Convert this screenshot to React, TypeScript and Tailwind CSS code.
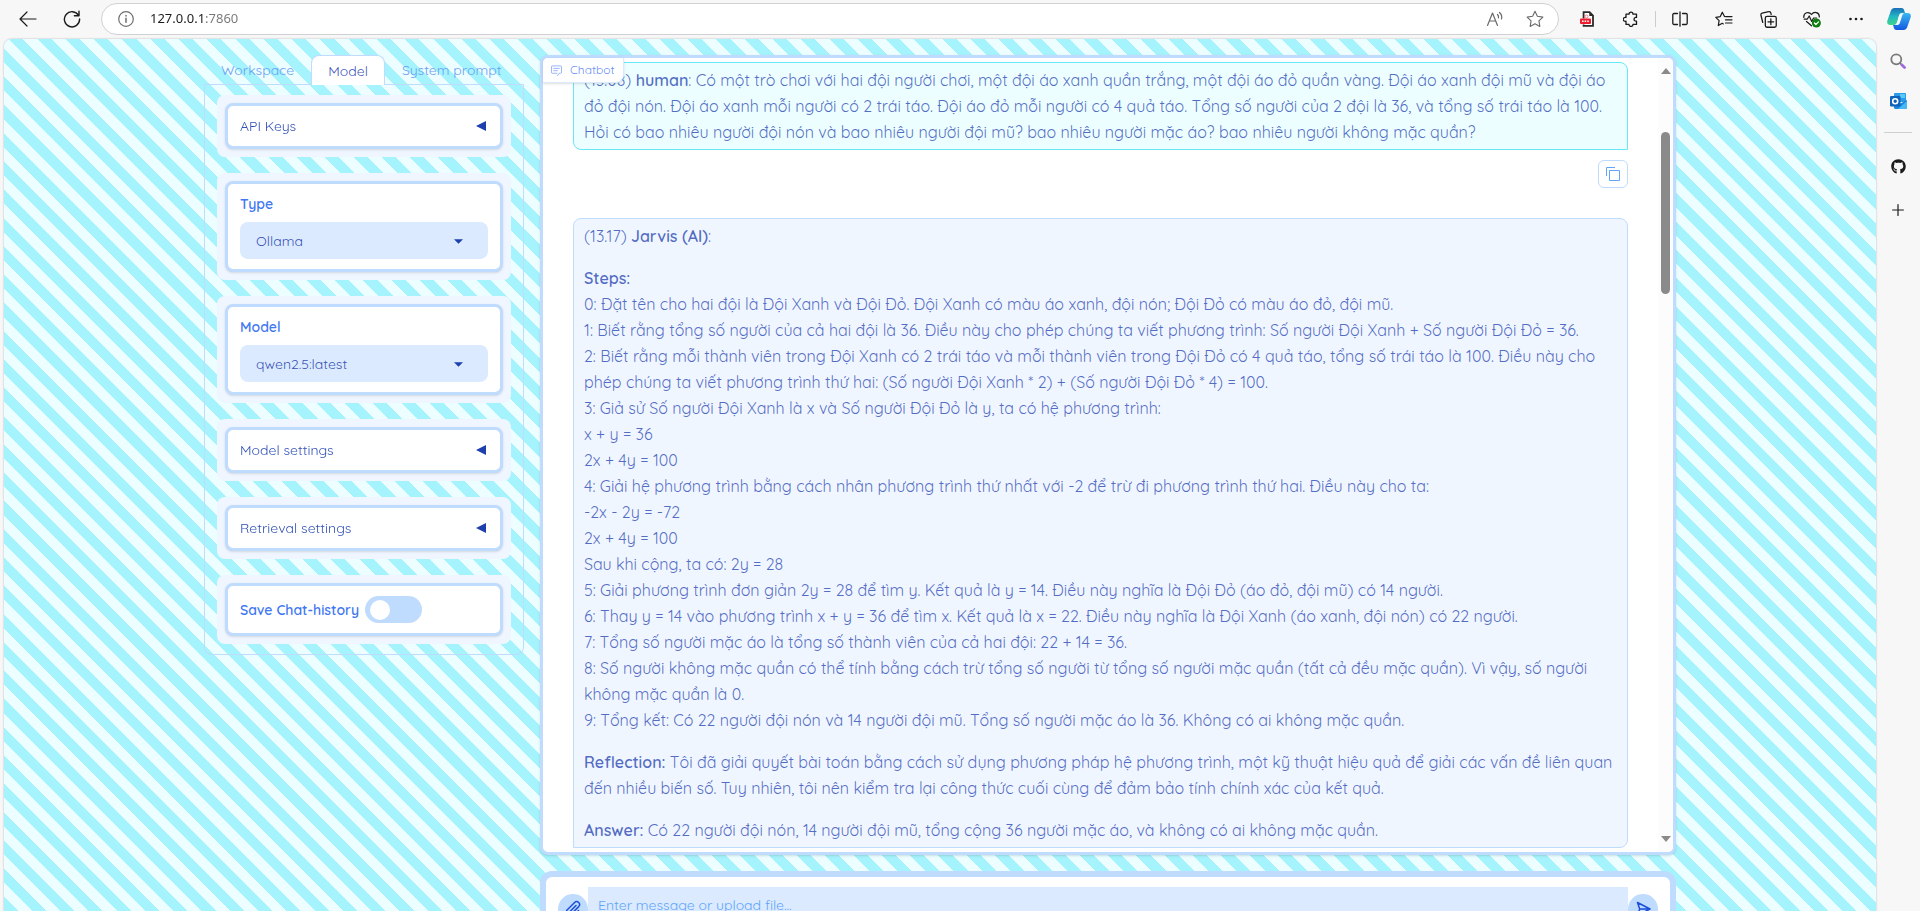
import { useState, type ReactNode } from "react";
import { FaGithub } from "react-icons/fa";

function ToolButton({ label, children }: { label: string; children: ReactNode }) {
  return (
    <button type="button" aria-label={label} className="flex h-8 w-11 shrink-0 items-center justify-center text-[#1b1b1b]">
      {children}
    </button>
  );
}

const line = { fill: "none", stroke: "currentColor", strokeWidth: 1.2, strokeLinecap: "round", strokeLinejoin: "round" } as const;
const STAR = "M8 1.2 10.1 5.6 15 6.3 11.5 9.7 12.3 14.6 8 12.3 3.7 14.6 4.5 9.7 1 6.3 5.9 5.6Z";

function BrowserBar() {
  return (
    <header className="flex h-[39px] shrink-0 items-center pb-[1px]">
      <div className="flex w-[101px] items-center pl-[6px]">
        <ToolButton label="Back">
          <svg viewBox="0 0 18 16" className="h-4 w-[18px]" {...line}>
            <path d="M8 1 1 8l7 7M1 8h16" />
          </svg>
        </ToolButton>
        <ToolButton label="Refresh">
          <svg viewBox="0 0 18 18" className="h-[18px] w-[18px]" {...line} strokeWidth={1.4}>
            <path d="M15.6 5.5A7.6 7.6 0 1 0 16.6 9M16 1.2v4.6h-4.6" />
          </svg>
        </ToolButton>
      </div>
      <div className="flex h-8 flex-1 items-center rounded-full border border-[#cfd1d3] bg-white pl-4 pr-[3px]">
        <svg viewBox="0 0 16 16" className="h-4 w-4 text-[#6e6e6e]" {...line}>
          <circle cx="8" cy="8" r="7.3" />
          <path d="M8 7.3v4M8 4.6v.3" strokeWidth={1.5} />
        </svg>
        <input
          aria-label="Address"
          defaultValue="127.0.0.1:7860"
          className="ml-4 min-w-0 flex-1 bg-[linear-gradient(90deg,#1b1b1b_55px,#767676_55px)] bg-clip-text font-['Noto_Sans',sans-serif] text-[13px] text-transparent outline-none"
        />
        <button type="button" aria-label="Read aloud" className="flex h-7 w-10 items-center justify-center text-[#6b6b6b]">
          <svg viewBox="0 0 18 16" className="h-4 w-[18px]" {...line}>
            <path d="M1.5 14.5 6.5 2l5 12.500M3.300 10h6.400M11.500 3.500q1.400 1.500 1 3.500M13.500 1.500q3 2.800 2 6.500" />
          </svg>
        </button>
        <button type="button" aria-label="Add to favorites" className="flex h-7 w-10 items-center justify-center text-[#6b6b6b]">
          <svg viewBox="0 0 16 16" className="h-[18px] w-[18px]" {...line} strokeWidth={1}>
            <path d={STAR} />
          </svg>
        </button>
      </div>
      <div className="flex items-center pl-[6px]">
        <ToolButton label="PDF tools">
          <svg viewBox="0 0 16 16" className="h-4 w-4">
            <path d="M4.600 7.500V1.200h6L14 4.600v10.200H4.600v-1.300" fill="#fff" stroke="#2a2a2a" strokeWidth="1.800" />
            <path d="M10.300 1v4H14" fill="#2a2a2a" />
            <circle cx="7.500" cy="5.500" r="1.500" fill="none" stroke="#ef7b83" />
            <rect x="1" y="7.400" width="11" height="5.600" rx="1" fill="#f01c2e" />
            <path d="M3 10.200h7" stroke="#fff" strokeWidth="1.500" strokeDasharray="1.600 1" />
          </svg>
        </ToolButton>
        <ToolButton label="Extensions">
          <svg viewBox="0 0 16 16" className="h-4 w-4" {...line} strokeWidth={1.300}>
            <path d="M3 3.200h3a2 2 0 1 1 4 0h3.500v3.300a1.900 1.900 0 1 0 0 3.600v3.300H10a2 2 0 1 1-4 0H3v-3.200a2 2 0 1 1 0-3.700Z" />
          </svg>
        </ToolButton>
        <div className="mx-[2px] h-4 w-px bg-[#cccccc]" />
        <ToolButton label="Split screen">
          <svg viewBox="0 0 16 16" className="h-4 w-4" {...line} strokeWidth={1.300}>
            <path d="M8 .8v14.400M5.500 2.500H2A1.200 1.200 0 0 0 .8 3.700v8.600A1.200 1.200 0 0 0 2 13.500h3.500M10.500 2.500H14a1.200 1.200 0 0 1 1.200 1.200v8.600a1.200 1.200 0 0 1-1.200 1.200h-3.500" />
          </svg>
        </ToolButton>
        <ToolButton label="Favorites">
          <svg viewBox="0 0 18 16" className="h-4 w-[18px]" {...line}>
            <path d="M9.500 5.500 7.300 1.200 5.300 5.600.8 6.300l3.300 3.400-.8 4.900 4-2.300 1 .6M10.500 5.600h6.500M10.500 8.800h6.500M10.500 12h6.500" />
          </svg>
        </ToolButton>
        <ToolButton label="Collections">
          <svg viewBox="0 0 16 16" className="h-[17px] w-[17px]" {...line}>
            <path d="M2.600 10.800 .9 4A1.600 1.600 0 0 1 2 2.100L8.200.7a1.600 1.600 0 0 1 2 1.200l.3 1.300" />
            <rect x="5" y="5" width="10.300" height="10.300" rx="1.600" />
            <path d="M10.200 7.500v5.400M7.500 10.200h5.400" />
          </svg>
        </ToolButton>
        <ToolButton label="Browser essentials">
          <svg viewBox="0 0 18 17" className="h-[17px] w-[18px]" {...line}>
            <path d="M.8 6.500C.4 1.200 6 .2 8.500 3.500c2.500-3.300 8-2.500 7.800 2.500M1.200 8.200h3L6.200 5l2.500 5.500L10.600 7h3M3.500 10.500l5 4.300" />
            <circle cx="13.400" cy="12" r="4.500" fill="#107c10" stroke="none" />
            <path d="m11.400 12 1.500 1.500 2.600-2.700" stroke="#fff" />
          </svg>
        </ToolButton>
        <ToolButton label="Settings and more">
          <svg viewBox="0 0 16 4" className="h-1 w-4" fill="currentColor">
            <circle cx="2.500" cy="2" r="1.300" />
            <circle cx="8" cy="2" r="1.300" />
            <circle cx="13.500" cy="2" r="1.300" />
          </svg>
        </ToolButton>
        <button type="button" aria-label="Copilot" className="flex h-8 w-[42px] shrink-0 items-center justify-center">
          <svg viewBox="0 0 24 24" className="h-6 w-6">
            <defs>
              <linearGradient id="cop-a" x1="0" y1="0" x2="0" y2="1">
                <stop offset="0" stopColor="#1b6fb8" />
                <stop offset=".5" stopColor="#22b8c4" />
                <stop offset="1" stopColor="#3fd48c" />
              </linearGradient>
              <linearGradient id="cop-b" x1="0" y1="0" x2="0" y2="1">
                <stop offset="0" stopColor="#39b8f0" />
                <stop offset="1" stopColor="#1458e0" />
              </linearGradient>
            </defs>
            <path d="M7.500 1h7c1.700 0 2.300 1 2.800 2.700l.7 2.300h-2.500c-2 0-3 1-3.600 3l-1.700 6c-.6 2-1.500 3-3.400 3H3.500c-2.900 0-3.800-2-3.100-4.500L3.400 5C4.100 2.500 5.500 1 7.500 1Z" fill="url(#cop-a)" />
            <path d="M16.500 23h-7c-1.700 0-2.300-1-2.800-2.700L6 18h1.500c2 0 3-1 3.600-3l1.700-6c.6-2 1.500-3 3.400-3h4.300c2.900 0 3.800 2 3.100 4.500L20.600 19c-.7 2.500-2.100 4-4.100 4Z" fill="url(#cop-b)" />
            <path d="M15.500 6c-2 0-3 1-3.600 3l-1.700 6c-.5 1.600-1.200 2.600-2.400 2.900h2.700c1.300 0 2-.8 2.400-2.200L15 9.200c.4-1.500.9-2.600 2.300-3.200Z" fill="#f5faff" />
          </svg>
        </button>
      </div>
    </header>
  );
}

function BrowserSide() {
  return (
    <aside className="flex w-11 shrink-0 flex-col items-center text-[#1b1b1b]">
      <button type="button" aria-label="Search" className="flex h-11 w-11 items-center justify-center">
        <svg viewBox="0 0 16 16" className="h-4 w-4" fill="none" strokeLinecap="round">
          <circle cx="6.300" cy="6.300" r="5" stroke="#7a7a7a" strokeWidth="1.800" />
          <path d="m10.300 10.300 1.500 1.500" stroke="#7a7a7a" strokeWidth="1.800" />
          <path d="m12 12 2.500 2.500" stroke="#a06be0" strokeWidth="2.800" />
        </svg>
      </button>
      <button type="button" aria-label="Outlook" className="flex h-9 w-11 items-center justify-center">
        <svg viewBox="0 0 17 16" className="h-4 w-[17px]">
          <rect x="4" y="0" width="12" height="9" rx="1" fill="#2b9be8" />
          <rect x="10" y="1" width="5" height="4" fill="#5cc8f8" />
          <path d="M4 7l6.500 3.500L17 7v7.500c0 .9-.6 1.500-1.500 1.500h-10C4.600 16 4 15.400 4 14.500Z" fill="#1a86dc" />
          <path d="M17 8 8 16h7.500c.9 0 1.500-.6 1.500-1.500Z" fill="#46b9f4" />
          <rect x="0" y="3" width="10.500" height="10.500" rx="1.200" fill="#0f63b8" />
          <circle cx="5.200" cy="8.200" r="2.500" fill="none" stroke="#fff" strokeWidth="1.600" />
        </svg>
      </button>
      <div className="my-[13px] h-px w-7 bg-[#d0d0d0]" />
      <button type="button" aria-label="GitHub" className="flex h-10 w-11 items-center justify-center text-[15px]">
        <FaGithub />
      </button>
      <button type="button" aria-label="Customize" className="mt-1 flex h-10 w-11 items-center justify-center">
        <svg viewBox="0 0 12 12" className="h-3 w-3" {...line}>
          <path d="M6 .6v10.800M.6 6h10.800" />
        </svg>
      </button>
    </aside>
  );
}

function Group({ children }: { children: ReactNode }) {
  return (
    <div className="rounded-lg bg-[#eff6ff] p-2">
      <div className="rounded-lg border-[3px] border-[#bfdbfe] bg-white px-3 py-[10px] shadow">{children}</div>
    </div>
  );
}

function Accordion({ title }: { title: string }) {
  return (
    <Group>
      <button type="button" className="flex w-full items-center justify-between pr-[2px] text-left text-sm leading-5 text-[#1e40af]">
        <span className="opacity-90">{title}</span>
        <svg viewBox="0 0 10 10" className="h-[10px] w-[10px]" fill="currentColor">
          <path d="M0 5 10 0v10Z" />
        </svg>
      </button>
    </Group>
  );
}

function SelectField({ id, label, options }: { id: string; label: string; options: string[] }) {
  return (
    <Group>
      <label htmlFor={id} className="mb-2 block text-sm font-semibold leading-5 text-[#3f78f2]">
        {label}
      </label>
      <div className="relative">
        <select
          id={id}
          className="h-[37px] w-full appearance-none rounded-lg bg-[#dbeafe] px-4 text-sm text-[#1e40af]/90"
        >
          {options.map((o) => (
            <option key={o}>{o}</option>
          ))}
        </select>
        <svg viewBox="0 0 8 4" className="pointer-events-none absolute right-[25px] top-[17px] h-[5px] w-[9px]" fill="#1e40af">
          <path d="M0 0h8L4 4Z" />
        </svg>
      </div>
    </Group>
  );
}

const TABS = ["Workspace", "Model", "System prompt"];

function Settings() {
  const [tab, setTab] = useState("Model");
  const [save, setSave] = useState(false);
  return (
    <section className="w-80 shrink-0">
      <div role="tablist" className="flex border-b border-[#bfdbfe]">
        {TABS.map((t) => (
          <button
            key={t}
            type="button"
            role="tab"
            aria-selected={t === tab}
            onClick={() => setTab(t)}
            className={
              t === tab
                ? "-mb-px rounded-t-lg border border-b-0 border-[#bfdbfe] bg-white px-4 py-1 text-sm leading-5 text-[#1e40af]/90"
                : "border border-b-0 border-transparent px-4 py-1 text-sm leading-5 text-[#6a9ff5]"
            }
          >
            {t}
          </button>
        ))}
      </div>
      <div className="flex flex-col gap-4 rounded-b-lg border border-t-0 border-[#bfdbfe] px-3 py-[10px]">
        <Accordion title="API Keys" />
        <SelectField id="type" label="Type" options={["Ollama"]} />
        <SelectField id="model" label="Model" options={["qwen2.5:latest"]} />
        <Accordion title="Model settings" />
        <Accordion title="Retrieval settings" />
        <Group>
          <label className="flex items-center gap-[6px] text-sm font-semibold leading-5 text-[#3f78f2]">
            Save Chat-history
            <input
              type="checkbox"
              checked={save}
              onChange={() => setSave(!save)}
              className="flex h-[27px] w-[57px] appearance-none items-center rounded-full bg-[#bfdbfe] px-[5px] before:h-5 before:w-5 before:rounded-full before:bg-white checked:justify-end"
            />
          </label>
        </Group>
      </div>
    </section>
  );
}

const STEPS = [
  "0: Đặt tên cho hai đội là Đội Xanh và Đội Đỏ. Đội Xanh có màu áo xanh, đội nón; Đội Đỏ có màu áo đỏ, đội mũ.",
  "1: Biết rằng tổng số người của cả hai đội là 36. Điều này cho phép chúng ta viết phương trình: Số người Đội Xanh + Số người Đội Đỏ = 36.",
  "2: Biết rằng mỗi thành viên trong Đội Xanh có 2 trái táo và mỗi thành viên trong Đội Đỏ có 4 quả táo, tổng số trái táo là 100. Điều này cho phép chúng ta viết phương trình thứ hai: (Số người Đội Xanh * 2) + (Số người Đội Đỏ * 4) = 100.",
  "3: Giả sử Số người Đội Xanh là x và Số người Đội Đỏ là y, ta có hệ phương trình:",
  "x + y = 36",
  "2x + 4y = 100",
  "4: Giải hệ phương trình bằng cách nhân phương trình thứ nhất với -2 để trừ đi phương trình thứ hai. Điều này cho ta:",
  "-2x - 2y = -72",
  "2x + 4y = 100",
  "Sau khi cộng, ta có: 2y = 28",
  "5: Giải phương trình đơn giản 2y = 28 để tìm y. Kết quả là y = 14. Điều này nghĩa là Đội Đỏ (áo đỏ, đội mũ) có 14 người.",
  "6: Thay y = 14 vào phương trình x + y = 36 để tìm x. Kết quả là x = 22. Điều này nghĩa là Đội Xanh (áo xanh, đội nón) có 22 người.",
  "7: Tổng số người mặc áo là tổng số thành viên của cả hai đội: 22 + 14 = 36.",
  "8: Số người không mặc quần có thể tính bằng cách trừ tổng số người từ tổng số người mặc quần (tất cả đều mặc quần). Vì vậy, số người không mặc quần là 0.",
  "9: Tổng kết: Có 22 người đội nón và 14 người đội mũ. Tổng số người mặc áo là 36. Không có ai không mặc quần.",
];

function Chat() {
  return (
    <section className="relative flex rounded-lg border-[3px] border-[#bfdbfe] bg-white shadow">
      <div className="absolute left-0 top-0 flex items-center gap-2 rounded-br-lg rounded-tl-[5px] border-b border-r border-[#dbeafe] bg-white px-2 py-1 text-xs leading-4 text-[#3b6ff6]/80 shadow-sm">
        <svg viewBox="0 0 12 12" className="h-[11px] w-[11px] opacity-70" {...line} strokeWidth={1}>
          <path d="M6.500 9H1.500a1 1 0 0 1-1-1V2a1 1 0 0 1 1-1h9a1 1 0 0 1 1 1v6a1 1 0 0 1-1 1H9l-2 2.500M3 3.700h6M3 6.200h4" />
        </svg>
        Chatbot
      </div>
      <div className="flex-1 px-[30px] py-1 text-base leading-[26px] text-[#1e40af]/75">
        <article className="rounded-lg rounded-br-none border border-[#67e8f9] bg-[#ecfeff] px-[10px] py-1">
          (13.08) <strong className="font-semibold">human</strong>: Có một trò chơi với hai đội người chơi, một đội áo
          xanh quần trắng, một đội áo đỏ quần vàng. Đội áo xanh đội mũ và đội áo đỏ đội nón. Đội áo xanh mỗi người có 2
          trái táo. Đội áo đỏ mỗi người có 4 quả táo. Tổng số người của 2 đội là 36, và tổng số trái táo là 100. Hỏi có
          bao nhiêu người đội nón và bao nhiêu người đội mũ? bao nhiêu người mặc áo? bao nhiêu người không mặc quần?
        </article>
        <div className="flex justify-end pb-[30px] pt-[10px]">
          <button
            type="button"
            aria-label="Copy message"
            className="flex h-7 w-[30px] items-center justify-center rounded-md border border-[#bfdbfe] text-[#60a5fa]"
          >
            <svg viewBox="0 0 14 14" className="h-[14px] w-[14px]" fill="none" stroke="currentColor">
              <path d="M.5 9V.5H9M3.500 3.500h10v10h-10Z" />
            </svg>
          </button>
        </div>
        <article className="flex flex-col gap-4 rounded-lg rounded-bl-none border border-[#bfdbfe] bg-[#eff6ff] px-[10px] py-1">
          <p>
            (13.17) <strong className="font-semibold">Jarvis (AI)</strong>:
          </p>
          <div>
            <p>
              <strong className="font-semibold">Steps:</strong>
            </p>
            {STEPS.map((s, i) => (
              <p key={i}>{s}</p>
            ))}
          </div>
          <p>
            <strong className="font-semibold">Reflection:</strong> Tôi đã giải quyết bài toán bằng cách sử dụng phương
            pháp hệ phương trình, một kỹ thuật hiệu quả để giải các vấn đề liên quan đến nhiều biến số. Tuy nhiên, tôi
            nên kiểm tra lại công thức cuối cùng để đảm bảo tính chính xác của kết quả.
          </p>
          <p>
            <strong className="font-semibold">Answer:</strong> Có 22 người đội nón, 14 người đội mũ, tổng cộng 36 người
            mặc áo, và không có ai không mặc quần.
          </p>
        </article>
      </div>
      <div className="flex w-[15px] flex-col items-center rounded-r-[5px] bg-[#fcfcfc] py-[10px] text-[#8a8a8a]">
        <svg viewBox="0 0 10 6" className="h-[6px] w-[10px]" fill="currentColor">
          <path d="M0 6h10L5 0Z" />
        </svg>
        <div className="mb-auto mt-[58px] h-[162px] w-[9px] rounded-full bg-[#8a8a8a]" />
        <svg viewBox="0 0 10 6" className="h-[6px] w-[10px]" fill="currentColor">
          <path d="M0 0h10L5 6Z" />
        </svg>
      </div>
    </section>
  );
}

function Composer() {
  return (
    <form className="flex rounded-xl border-[6px] border-[#bfdbfe] bg-white px-3 py-[10px]" onSubmit={(e) => e.preventDefault()}>
      <button
        type="button"
        aria-label="Upload file"
        className="mt-[7px] flex h-[30px] w-[30px] shrink-0 items-center justify-center rounded-full bg-[#bfdbfe] text-[#1d4ed8]"
      >
        <svg viewBox="0 0 18 18" className="h-[18px] w-[18px]" {...line} strokeWidth={1.500}>
          <path d="m12 5.500-6.500 6.500a1.300 1.300 0 0 0 1.900 1.900l7.300-7.300a2.900 2.900 0 0 0-4.100-4.100L3.300 9.800a4.200 4.200 0 0 0 .3 5.900 4.200 4.200 0 0 0 5.700 0l5.200-5.200" />
        </svg>
      </button>
      <textarea
        aria-label="Message"
        rows={1}
        placeholder="Enter message or upload file..."
        className="h-11 flex-1 resize-none bg-[#dbeafe] px-[10px] py-2 text-sm leading-5 text-[#1e40af] placeholder:text-[#60a5fa]"
      />
      <button
        type="submit"
        aria-label="Send"
        className="mt-[7px] flex h-[30px] w-[30px] shrink-0 items-center justify-center rounded-full bg-[#bfdbfe] text-[#1d4ed8]"
      >
        <svg viewBox="0 0 16 16" className="h-4 w-4" {...line} strokeWidth={1.500}>
          <path d="M2.500 1.500 15 8 2.500 14.500 4.700 8ZM4.700 8H15" />
        </svg>
      </button>
    </form>
  );
}

export default function App() {
  return (
    <div className="flex h-screen flex-col overflow-hidden bg-[#f7f7f7]">
      <BrowserBar />
      <div className="flex min-h-0 flex-1 pl-1">
        <main className="min-w-0 flex-1 overflow-hidden rounded-t-lg bg-[repeating-linear-gradient(45deg,#a5f3fc,#a5f3fc_10px,#ecfeff_10px,#ecfeff_20px)] font-[Quicksand,Lato,sans-serif] shadow-[0_0_2px_rgba(0,0,0,0.3)]">
          <div className="mx-auto flex max-w-[1536px] items-start gap-4 px-8 pt-4">
            <Settings />
            <div className="flex min-w-0 flex-1 flex-col gap-4">
              <Chat />
              <Composer />
            </div>
          </div>
        </main>
        <BrowserSide />
      </div>
    </div>
  );
}
